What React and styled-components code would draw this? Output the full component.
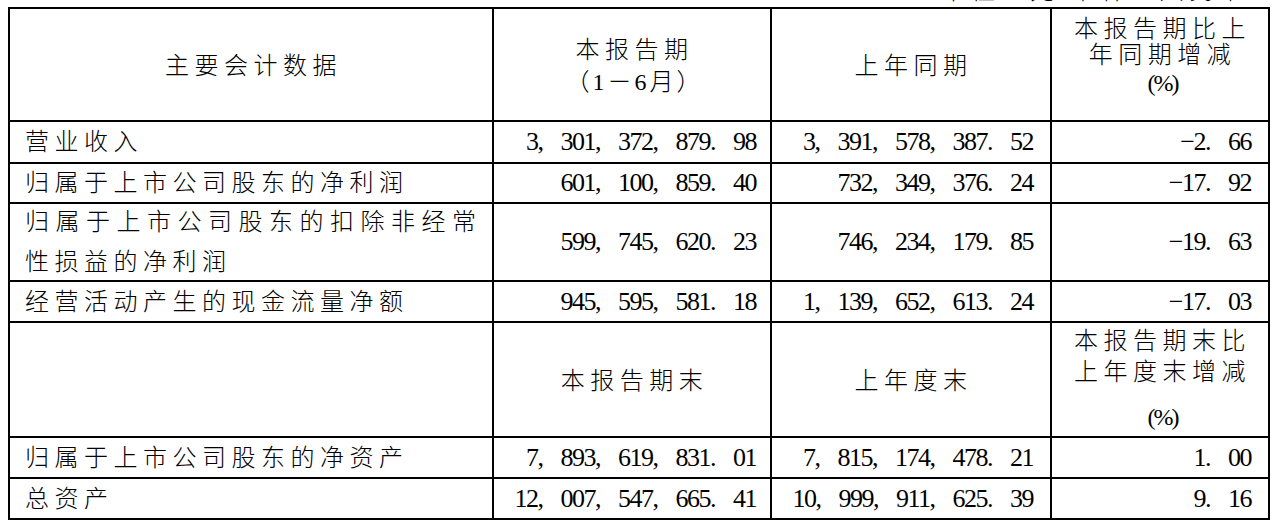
import React from "react";
import styled, { createGlobalStyle } from "styled-components";

const GlobalStyle = createGlobalStyle`
  html, body {
    margin: 0;
    padding: 0;
    background: #ffffff;
  }
  body {
    font-family: "Liberation Serif", "Noto Sans CJK SC", serif;
    color: #000000;
  }
`;

const Page = styled.div`
  padding: 0 8px;
  width: 1262px;
`;

const Caption = styled.div`
  height: 7px;
  overflow: hidden;
  display: flex;
  justify-content: flex-end;
  align-items: flex-end;
  padding-right: 22px;
  font-size: 24px;
  font-weight: 300;
  letter-spacing: 5.5px;
`;

const CaptionText = styled.span`
  display: block;
  line-height: 24px;
  margin-bottom: 4px;
  white-space: pre;
`;

const Table = styled.div`
  display: grid;
  grid-template-columns: 484px 278px 280px 218px;
  grid-template-rows: 113px 42px 40px 78px 41px 115px 41px 41px;
  border-top: 2px solid #000;
  border-left: 2px solid #000;
`;

const justify = {
  left: "flex-start",
  right: "flex-end",
  center: "center",
};

const Cell = styled.div`
  box-sizing: border-box;
  border-right: 2px solid #000;
  border-bottom: 2px solid #000;
  display: flex;
  flex-direction: column;
  justify-content: center;
  align-items: ${(p) => justify[p.$align || "center"]};
  text-align: ${(p) => p.$align || "center"};
  padding: ${(p) => p.$pad || "0"};
  overflow: hidden;
`;

const Label = styled.div`
  font-size: 24px;
  font-weight: 300;
  letter-spacing: ${(p) => (p.$ls != null ? p.$ls : 5.5)}px;
  line-height: ${(p) => p.$lh || 40}px;
  margin-top: ${(p) => p.$mt || 0}px;
  white-space: nowrap;
`;

const Percent = styled.div`
  font-size: 24px;
  letter-spacing: -2px;
  line-height: ${(p) => p.$lh || 31}px;
  margin-top: ${(p) => p.$mt || 0}px;
  white-space: nowrap;
`;

const Num = styled.div`
  font-size: 26px;
  letter-spacing: -1.5px;
  line-height: 38px;
  white-space: nowrap;
`;

const Sep = styled.span`
  display: inline-block;
  width: 23px;
  letter-spacing: 0;
  text-align: left;
`;

const renderNum = (str) =>
  str.split(/([,.])/).map((part, i) =>
    part === "," || part === "." ? (
      <Sep key={i}>{part}</Sep>
    ) : (
      <React.Fragment key={i}>{part}</React.Fragment>
    )
  );

const rows1 = [
  [[["营业收入"]], "3,301,372,879.98", "3,391,578,387.52", "−2.66"],
  [[["归属于上市公司股东的净利润"]], "601,100,859.40", "732,349,376.24", "−17.92"],
  [
    [["归属于上市公司股东的扣除非经常", 6.5], ["性损益的净利润"]],
    "599,745,620.23",
    "746,234,179.85",
    "−19.63",
  ],
  [[["经营活动产生的现金流量净额"]], "945,595,581.18", "1,139,652,613.24", "−17.03"],
];

const rows2 = [
  [[["归属于上市公司股东的净资产"]], "7,893,619,831.01", "7,815,174,478.21", "1.00"],
  [[["总资产"]], "12,007,547,665.41", "10,999,911,625.39", "9.16"],
];

const HeadPad = "3px 0 0 5px";

function DataRow({ row }) {
  const [label, a, b, c] = row;
  return (
    <>
      <Cell $align="left" $pad="0 0 0 15px">
        {label.map(([text, ls], i) => (
          <Label key={i} $ls={ls}>
            {text}
          </Label>
        ))}
      </Cell>
      <Cell $align="right" $pad="0 14px 0 0">
        <Num>{renderNum(a)}</Num>
      </Cell>
      <Cell $align="right" $pad="0 17px 0 0">
        <Num>{renderNum(b)}</Num>
      </Cell>
      <Cell $align="right" $pad="0 17px 0 0">
        <Num>{renderNum(c)}</Num>
      </Cell>
    </>
  );
}

export default function App() {
  return (
    <>
      <GlobalStyle />
      <Page>
        <Caption>
          <CaptionText>单位：元 币种：人民币</CaptionText>
        </Caption>
        <Table>
          <Cell $pad={HeadPad}>
            <Label>主要会计数据</Label>
          </Cell>
          <Cell $pad={HeadPad}>
            <Label $lh={32}>本报告期</Label>
            <Label $lh={32} $ls={3}>
              （1－6月）
            </Label>
          </Cell>
          <Cell $pad={HeadPad}>
            <Label>上年同期</Label>
          </Cell>
          <Cell $pad="0 0 15px 5px">
            <Label $lh={26}>本报告期比上</Label>
            <Label $lh={26}>年同期增减</Label>
            <Percent $lh={31}>(%)</Percent>
          </Cell>

          {rows1.map((r, i) => (
            <DataRow key={i} row={r} />
          ))}

          <Cell />
          <Cell $pad={HeadPad}>
            <Label>本报告期末</Label>
          </Cell>
          <Cell $pad={HeadPad}>
            <Label>上年度末</Label>
          </Cell>
          <Cell $pad="0 0 0 5px">
            <Label $lh={31}>本报告期末比</Label>
            <Label $lh={31}>上年度末增减</Label>
            <Percent $lh={31} $mt={14}>
              (%)
            </Percent>
          </Cell>

          {rows2.map((r, i) => (
            <DataRow key={i} row={r} />
          ))}
        </Table>
      </Page>
    </>
  );
}
